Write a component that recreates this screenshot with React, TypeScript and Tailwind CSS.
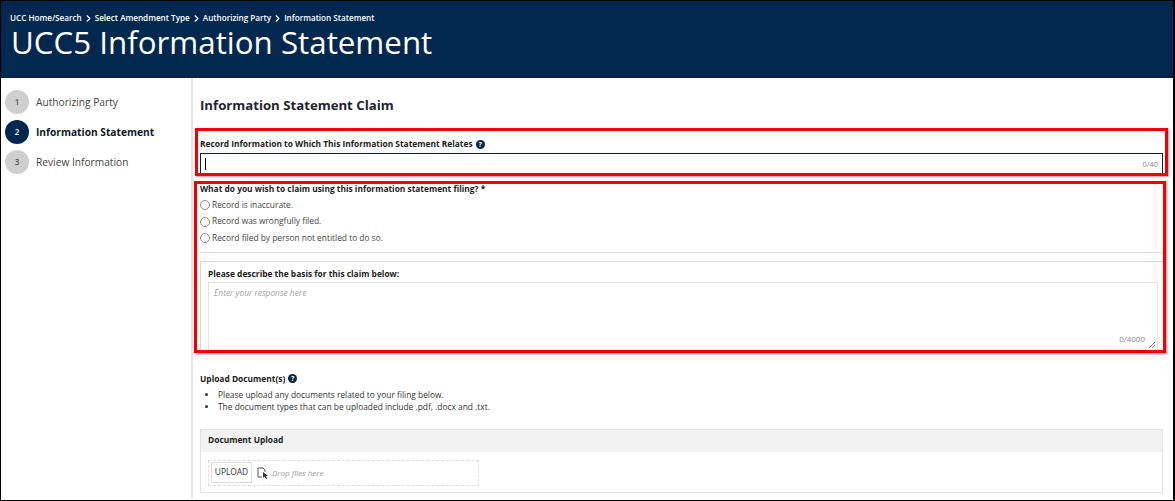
import React from 'react';
import { ChevronRight } from 'lucide-react';

const crumbs = ['UCC Home/Search', 'Select Amendment Type', 'Authorizing Party', 'Information Statement'];
const steps = [
  { n: 1, label: 'Authorizing Party' },
  { n: 2, label: 'Information Statement', active: true },
  { n: 3, label: 'Review Information' },
];
const claims = ['Record is inaccurate.', 'Record was wrongfully filed.', 'Record filed by person not entitled to do so.'];

const Help = () => (
  <span className="inline-flex w-[9px] h-[9px] rounded-full bg-[#0b2545] text-white text-[7px] font-bold items-center justify-center leading-none ml-[3px]">?</span>
);

export default function App() {
  return (
    <div className="relative w-[1175px] h-[501px] overflow-hidden bg-white border-l border-t border-r-2 border-b border-black font-['Open_Sans',sans-serif] text-[#1c1c1c]">
      <header className="h-[77px] bg-[#02284f] pl-[9px] pt-[11px] text-white border-b border-[#0d2038]">
        <nav className="flex items-center text-[8.15px] font-semibold leading-[12px]">
          {crumbs.map((c, i) => (
            <React.Fragment key={c}>
              {i > 0 && <ChevronRight size={11} strokeWidth={2.5} className="mx-px" />}
              <span>{c}</span>
            </React.Fragment>
          ))}
        </nav>
        <h1 className="text-[31.3px] leading-[36px] pl-px">UCC5 Information Statement</h1>
      </header>

      <div className="flex">
        <aside className="w-[192px] h-[421px] shrink-0 border-r-2 border-[#e6e6e6] pl-[4px] pt-[12px]">
          {steps.map(s => (
            <div key={s.n} className="flex items-center h-[24px] mb-[6px] gap-[7px]">
              <span className={`w-[24px] h-[24px] rounded-full flex items-center justify-center text-[8px] font-semibold ${s.active ? 'bg-[#02284f] text-white' : 'bg-[#cfcfcf] text-[#555]'}`}>{s.n}</span>
              <span className={`text-[10.2px] mt-px ${s.active ? 'font-bold text-[#0b1a2b]' : 'text-[#444]'}`}>{s.label}</span>
            </div>
          ))}
        </aside>

        <main className="flex-1 pl-[7px] pr-[10px]">
          <h2 className="text-[13.2px] font-bold text-[#1d2430] leading-[18px] mt-[18px]">Information Statement Claim</h2>

          <div className="mt-[24px] flex items-center text-[8.4px] font-bold leading-[12px]">
            Record Information to Which This Information Statement Relates
            <Help />
          </div>
          <div className="relative mt-[3px] h-[21px] border border-[#0b1f3a] bg-white flex items-center pl-[4px]">
            <span className="w-px h-[12px] bg-black" />
            <span className="absolute right-[4px] bottom-[3px] text-[7.5px] text-[#8a8a8a]">0/40</span>
          </div>

          <div className="mt-[9px] text-[8.4px] font-bold leading-[12px]">What do you wish to claim using this information statement filing? *</div>
          <div className="mt-[2px]">
            {claims.map(c => (
              <label key={c} className="flex items-center h-[16.5px] text-[8.4px] text-[#444]">
                <span className="w-[10px] h-[10px] rounded-full border border-[#8c8c8c] mr-[2px] bg-white" />
                {c}
              </label>
            ))}
          </div>

          <div className="mt-[5px] border-t border-[#dedede]" />
          <div className="mt-[8px] h-[91px] border-t border-l border-[#d6d6d6] pl-[7px] pr-[5px] pt-[6px]">
            <div className="text-[8.4px] font-bold leading-[12px]">Please describe the basis for this claim below:</div>
            <div className="relative mt-[2px] h-[69px] border border-[#e3e3e3] pl-[5px] pt-[4px] text-[8.4px] italic text-[#a3a3a3] leading-[12px]">
              Enter your response here
              <span className="absolute right-[12px] bottom-[5px] text-[8px] not-italic text-[#8a8a8a]">0/4000</span>
              <svg className="absolute right-[1px] bottom-[1px]" width="8" height="8" viewBox="0 0 8 8">
                <path d="M1 7 L7 1 M4 7 L7 4" stroke="#555" strokeWidth="0.8" />
              </svg>
            </div>
          </div>

          <div className="mt-[21px] flex items-center text-[8.4px] font-bold leading-[12px]">
            Upload Document(s)
            <Help />
          </div>
          <ul className="list-disc pl-[18px] mt-[4px] text-[8.4px] leading-[12px] text-[#333]">
            <li>Please upload any documents related to your filing below.</li>
            <li>The document types that can be uploaded include .pdf, .docx and .txt.</li>
          </ul>

          <div className="mt-[16px] border border-[#e2e2e2] h-[64px]">
            <div className="h-[22px] bg-[#f2f2f2] pl-[7px] flex items-center text-[8.4px] font-bold">Document Upload</div>
            <div className="ml-[7px] mt-[8px] w-[271px] h-[26px] border border-dashed border-[#dddddd] flex items-center pl-[2px]">
              <span className="w-[41px] h-[21px] border border-[#dedede] flex items-center justify-center text-[8.4px] text-[#333]">UPLOAD</span>
              <svg className="ml-[5px]" width="12" height="12" viewBox="0 0 12 12" fill="none">
                <path d="M1 1 H6 L8 3 V5 M1 1 V10 H5" stroke="#555" strokeWidth="1" />
                <path d="M6 5 L6 11 L7.5 9.5 L9 12 L10 11.5 L9 9 L11 9 Z" fill="#333" />
              </svg>
              <span className="ml-[3px] text-[8px] italic font-normal text-[#9a9a9a]">Drop files here</span>
            </div>
          </div>
        </main>
      </div>

      {/* annotation boxes drawn over the screenshot */}
      <div className="absolute left-[194px] top-[127px] w-[973px] h-[48px] border-[3px] border-[#f00000] shadow-[1px_1px_2px_rgba(0,0,0,0.4)]" />
      <div className="absolute left-[193px] top-[180px] w-[972px] h-[172px] border-[3px] border-[#f00000] shadow-[1px_1px_2px_rgba(0,0,0,0.4)]" />
    </div>
  );
}
